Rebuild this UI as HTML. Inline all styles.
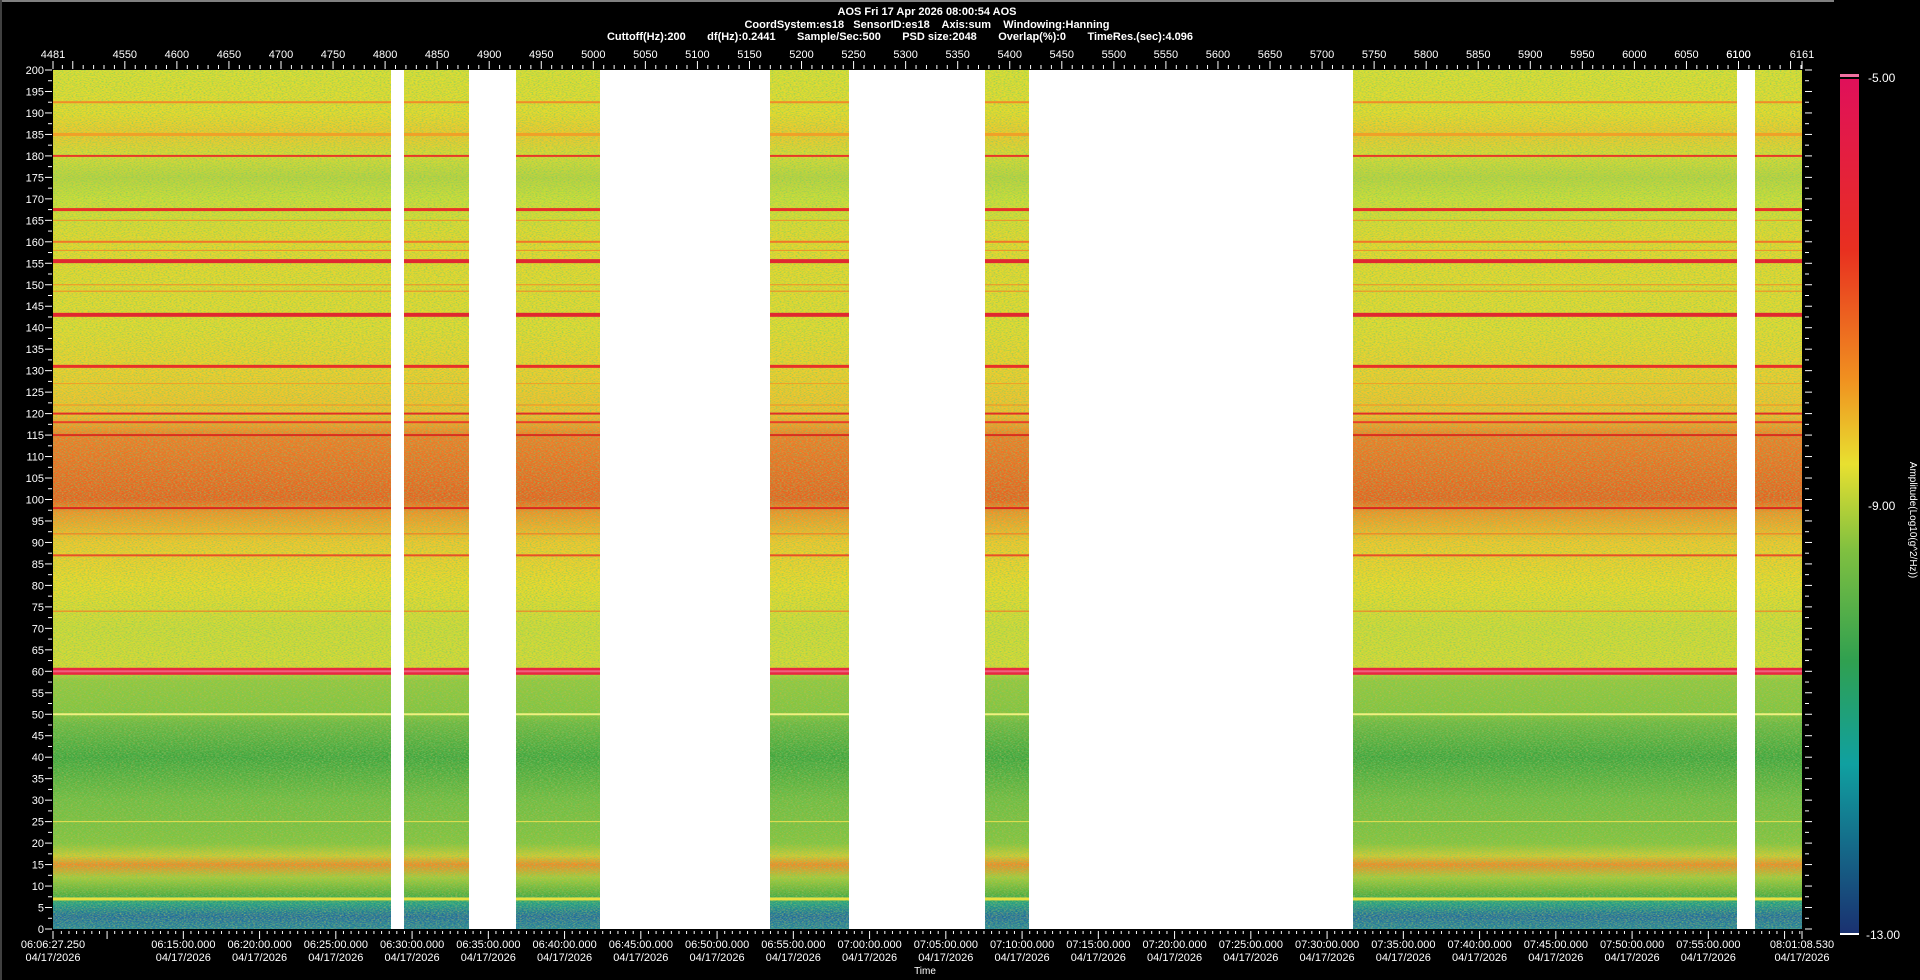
<!DOCTYPE html>
<html><head><meta charset="utf-8"><style>
html,body{margin:0;padding:0;background:#000;width:1920px;height:980px;overflow:hidden}
svg text{font-family:"Liberation Sans",Arial,sans-serif;fill:#fff}
</style></head><body>
<svg id="s" width="1920" height="980" xmlns="http://www.w3.org/2000/svg">
<defs>
<linearGradient id="spec" x1="0" y1="0" x2="0" y2="1">
<stop offset="0" stop-color="#dce030"/>
<stop offset="0.05" stop-color="#e8dc28"/>
<stop offset="0.075" stop-color="#f0c828"/>
<stop offset="0.1" stop-color="#d8dc30"/>
<stop offset="0.125" stop-color="#b8d43c"/>
<stop offset="0.15" stop-color="#cce034"/>
<stop offset="0.2" stop-color="#e8d828"/>
<stop offset="0.3" stop-color="#e4dc2c"/>
<stop offset="0.35" stop-color="#f0d028"/>
<stop offset="0.4" stop-color="#f4c028"/>
<stop offset="0.425" stop-color="#f47824"/>
<stop offset="0.5" stop-color="#ec5c1c"/>
<stop offset="0.515" stop-color="#f49024"/>
<stop offset="0.55" stop-color="#f4c828"/>
<stop offset="0.6" stop-color="#ecdc28"/>
<stop offset="0.65" stop-color="#d0dc34"/>
<stop offset="0.695" stop-color="#d8dc30"/>
<stop offset="0.71" stop-color="#94c83c"/>
<stop offset="0.75" stop-color="#84c43c"/>
<stop offset="0.76" stop-color="#6cb840"/>
<stop offset="0.8" stop-color="#3ca43c"/>
<stop offset="0.85" stop-color="#70bc40"/>
<stop offset="0.9" stop-color="#84c43c"/>
<stop offset="0.915" stop-color="#d0cc30"/>
<stop offset="0.925" stop-color="#f48824"/>
<stop offset="0.94" stop-color="#a8cc38"/>
<stop offset="0.96" stop-color="#50ac3c"/>
<stop offset="0.97" stop-color="#1c9c88"/>
<stop offset="0.985" stop-color="#1c68a0"/>
<stop offset="1" stop-color="#2080a0"/>
</linearGradient>
<linearGradient id="cb" x1="0" y1="0" x2="0" y2="1">
<stop offset="0" stop-color="#e0105a"/>
<stop offset="0.2" stop-color="#e83020"/>
<stop offset="0.35" stop-color="#f09020"/>
<stop offset="0.45" stop-color="#e8e030"/>
<stop offset="0.55" stop-color="#80c040"/>
<stop offset="0.68" stop-color="#30a050"/>
<stop offset="0.8" stop-color="#10a0a0"/>
<stop offset="1" stop-color="#1a3070"/>
</linearGradient>
<filter id="nz" x="0" y="0" width="100%" height="100%">
<feTurbulence type="fractalNoise" baseFrequency="0.5 1.2" numOctaves="2" seed="3"/>
<feColorMatrix type="matrix" values="0 0 0 0 0.15  0 0 0 0 0.6  0 0 0 0 0.15  0 0 0 -3 1.75"/>
</filter>
<filter id="nz2" x="0" y="0" width="100%" height="100%">
<feTurbulence type="fractalNoise" baseFrequency="0.45 1.0" numOctaves="2" seed="11"/>
<feColorMatrix type="matrix" values="0 0 0 0 0.95  0 0 0 0 0.45  0 0 0 0 0.1  0 0 0 -3 1.6"/>
</filter>
</defs>
<rect x="0" y="0" width="1834" height="2" fill="#808080"/>
<rect x="0" y="0" width="2" height="980" fill="#404040"/>
<rect x="53" y="70" width="1749" height="859" fill="url(#spec)"/>
<rect x="53" y="70" width="1749" height="859" filter="url(#nz)" opacity="0.6"/>
<rect x="53" y="70" width="1749" height="859" filter="url(#nz2)" opacity="0.35"/>
<g id="lines"></g>
<g id="gaps" fill="#fff"></g>
<g id="ticks" stroke="#fff" stroke-width="1"></g>
<g id="labels" font-size="11"></g>
<text x="927" y="15" font-size="11" font-weight="bold" text-anchor="middle">AOS  Fri 17 Apr 2026 08:00:54  AOS</text>
<text x="927" y="28" font-size="11" font-weight="bold" text-anchor="middle" xml:space="preserve">CoordSystem:es18   SensorID:es18    Axis:sum    Windowing:Hanning</text>
<text x="900" y="40" font-size="11" font-weight="bold" text-anchor="middle" xml:space="preserve">Cuttoff(Hz):200       df(Hz):0.2441       Sample/Sec:500       PSD size:2048       Overlap(%):0       TimeRes.(sec):4.096</text>
<text x="925" y="974" font-size="10" text-anchor="middle">Time</text>
<rect x="1840" y="74" width="19" height="3" fill="#f070a0"/>
<rect x="1840" y="77" width="19" height="2" fill="#000"/>
<rect x="1840" y="79" width="19" height="856" fill="url(#cb)"/>
<rect x="1840" y="933" width="19" height="2" fill="#fff"/>
<text x="1868" y="82" font-size="12">-5.00</text>
<text x="1868" y="510" font-size="12">-9.00</text>
<text x="1866" y="939" font-size="12">-13.00</text>
<text transform="translate(1910,520) rotate(90)" font-size="10" text-anchor="middle">Amplitude(Log10(g^2/Hz))</text>
</svg>
<script>
var NS="http://www.w3.org/2000/svg";
function el(p,t,a,txt){var e=document.createElementNS(NS,t);for(var k in a)e.setAttribute(k,a[k]);if(txt!=null)e.textContent=txt;document.getElementById(p).appendChild(e);return e;}
var L=53,R=1802,T=70,B=929;
function fy(f){return T+(200-f)*(B-T)/200;}
var lines=[[192.5,"#f08c28",2],[185,"#f0a028",3],[180,"#e83828",2],[167.5,"#e83028",3],[165,"#f09028",1],[160,"#f07828",2],[158,"#f09028",1],[155.5,"#e02830",4],[150,"#f09028",1],[148.5,"#f08828",1],[143,"#e02830",4],[131,"#e83028",3],[127,"#f0a028",1],[122,"#f09028",1],[120,"#e03028",2],[118,"#e84028",2],[115,"#d83020",2],[98,"#d82820",2],[92,"#f07828",1],[87,"#e85028",2],[74,"#f07828",1],[60,"#e82840",7],[50,"#f0f080",2],[25,"#e8e050",1],[7,"#e8e040",3]];
lines.forEach(function(l){el("lines","rect",{x:L,y:fy(l[0])-l[2]/2,width:R-L,height:l[2],fill:l[1]});});
el("lines","rect",{x:L,y:fy(60)-1,width:R-L,height:2,fill:"#f06080"});
[[391,404],[469,516],[600,770],[849,985],[1029,1353],[1737,1755]].forEach(function(g){el("gaps","rect",{x:g[0],y:T,width:g[1]-g[0],height:B-T});});
for(var f=0;f<=200;f+=2.5){var y=fy(f);var maj=(f%5==0);
el("ticks","line",{x1:maj?45:48,x2:52,y1:y,y2:y});
el("ticks","line",{x1:1805,x2:maj?1812:1809,y1:y,y2:y});
if(maj)el("labels","text",{x:44,y:y+4,"text-anchor":"end"},String(f));}
var ux=(R-L)/1680;
for(var u=4490;u<=6161;u+=10){var x=L+(u-4481)*ux;el("ticks","line",{x1:x,x2:x,y1:(u%50==0)?61:65,y2:69});
if(u%50==0&&u>4520&&u<6140)el("labels","text",{x:x,y:58,"text-anchor":"middle"},String(u));}
el("ticks","line",{x1:L,x2:L,y1:61,y2:69});el("ticks","line",{x1:R,x2:R,y1:61,y2:69});
el("labels","text",{x:L,y:58,"text-anchor":"middle"},"4481");
el("labels","text",{x:R,y:58,"text-anchor":"middle"},"6161");
el("labels","text",{x:L+(6100-4481)*ux,y:58,"text-anchor":"middle"},"6100");
var t0=6*3600+6*60+27.25,span=6881.28;
function tx(t){return L+(t-t0)/span*(R-L);}
for(var t=6*3600+7*60;t<t0+span;t+=30){var x=tx(t);var m=(t%300==0);
el("ticks","line",{x1:x,x2:x,y1:931,y2:m?939:934});
if(m&&t>t0+400&&t<t0+span-300){var h=Math.floor(t/3600),mi=Math.floor(t%3600/60);
el("labels","text",{x:x,y:948,"text-anchor":"middle"},(h<10?"0":"")+h+":"+(mi<10?"0":"")+mi+":00.000");
el("labels","text",{x:x,y:961,"text-anchor":"middle"},"04/17/2026");}}
el("ticks","line",{x1:L,x2:L,y1:931,y2:939});el("ticks","line",{x1:R,x2:R,y1:931,y2:939});
el("labels","text",{x:L,y:948,"text-anchor":"middle"},"06:06:27.250");
el("labels","text",{x:L,y:961,"text-anchor":"middle"},"04/17/2026");
el("labels","text",{x:R,y:948,"text-anchor":"middle"},"08:01:08.530");
el("labels","text",{x:R,y:961,"text-anchor":"middle"},"04/17/2026");
</script>
</body></html>
